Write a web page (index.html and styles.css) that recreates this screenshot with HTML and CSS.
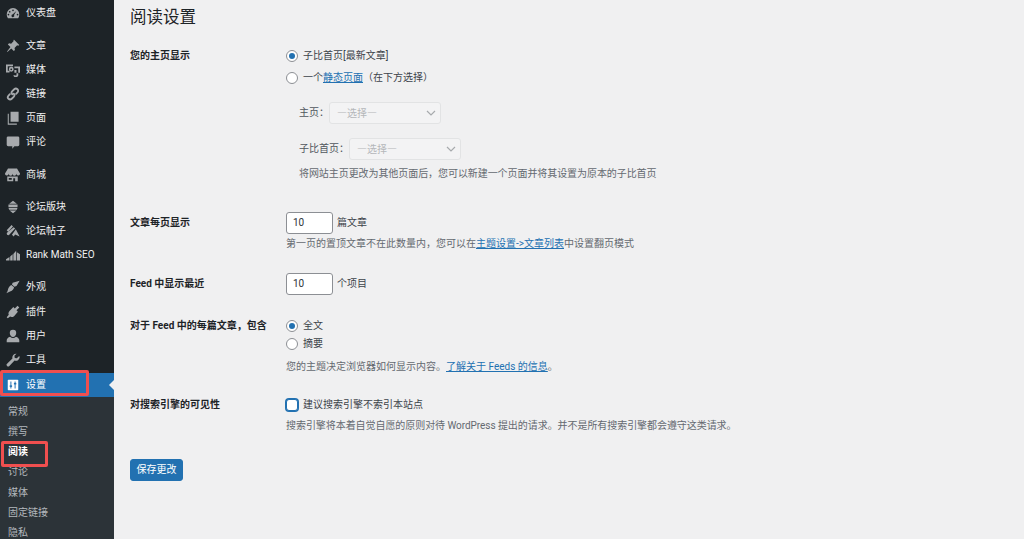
FILE: index.html
```html
<!DOCTYPE html>
<html lang="zh-CN">
<head>
<meta charset="utf-8">
<title>阅读设置</title>
<link rel="stylesheet" href="styles.css">
</head>
<body>
<aside class="sidebar">
  <nav class="menu">
    <a class="item"><svg class="ic" viewBox="0 0 20 20"><path d="M10 3a9 9 0 0 0-9 9c0 2 .7 3.900 1.800 5.500h14.400A9 9 0 0 0 19 12a9 9 0 0 0-9-9zM10 5a1.200 1.200 0 1 1 0 2.400A1.200 1.200 0 0 1 10 5zM5.300 7a1.200 1.200 0 1 1 0 2.400 1.200 1.200 0 0 1 0-2.400zM14.800 7l-3.300 5.800a2 2 0 1 1-1.700-.9zM3.500 11a1.200 1.200 0 1 1 0 2.400 1.200 1.200 0 0 1 0-2.400zM16.500 11a1.200 1.200 0 1 1 0 2.400 1.200 1.200 0 0 1 0-2.400z"/></svg><span>仪表盘</span></a>
    <div class="sep sep-first"></div>
    <a class="item"><svg class="ic" viewBox="0 0 20 20"><path d="M11.500 1l7.500 7.500-1.600 1-1.500-.5-3.700 3.700.6 3-1.600 1.600-3.700-3.700L2 18.500l-.5-.5 4.900-6.600L2.700 7.700l1.600-1.600 3 .6L11 3 10.500 1.500z"/></svg><span>文章</span></a>
    <a class="item"><svg class="ic" viewBox="0 0 20 20"><path d="M0 2h10v2.500H2.500V11H5v2.500H0zM7.500 5.500a3.500 3.500 0 1 1 0 7 3.500 3.500 0 0 1 0-7zM7.500 7.700a1.300 1.300 0 1 0 0 2.600 1.300 1.300 0 0 0 0-2.600zM12 5h8v9h-2.500V7.500H12zM17.500 14.500V16a3.500 3.500 0 0 1-7 1.500H13a1.200 1.200 0 0 0 2-1v-2zM12 10h3v4h-3z"/></svg><span>媒体</span></a>
    <a class="item"><svg class="ic line" viewBox="0 0 20 20"><path d="M9 10.500a3.200 3.200 0 0 1 0-4.500l2.800-2.800a3.200 3.200 0 0 1 4.600 4.600L14.500 9.700M11 9.500a3.200 3.200 0 0 1 0 4.500l-2.800 2.800a3.200 3.200 0 0 1-4.600-4.600l1.900-1.900"/></svg><span>链接</span></a>
    <a class="item"><svg class="ic" viewBox="0 0 20 20"><path d="M6.500 1H18v14.500H6.500zM4 4v14h11.500v1.500H2.500V4z"/></svg><span>页面</span></a>
    <a class="item"><svg class="ic" viewBox="0 0 20 20"><path d="M3 2h14a2 2 0 0 1 2 2v10a2 2 0 0 1-2 2h-5l-3 3.500V16H3a2 2 0 0 1-2-2V4a2 2 0 0 1 2-2z"/></svg><span>评论</span></a>
    <div class="sep"></div>
    <a class="item"><svg class="ic wide" viewBox="0 0 20 20"><path d="M4 2h12l4 6.500a2.500 2.500 0 0 1-5 .5 2.500 2.500 0 0 1-5 0 2.500 2.500 0 0 1-5 0 2.500 2.500 0 0 1-5-.5zM3 12.500h14V19h-3.500v-4h-2.500v4H3zM5 14.500v2.500h4v-2.500z"/></svg><span>商城</span></a>
    <div class="sep"></div>
    <a class="item"><svg class="ic" viewBox="0 0 20 20"><path d="M10 1l5.500 4.500h-11zM3.500 6.500h13v3.500h-13zM3.500 11h13l-1 3h-11zM5 15h10l-5 4z"/></svg><span>论坛版块</span></a>
    <a class="item"><svg class="ic" viewBox="0 0 20 20"><path d="M8 1.500l2 2-7 7.500-2-2zM11 4.500l2 2-9 9.500-2.500-.5-.5-2.500zM14 7.500l5.500 10.500-6.500-3-2 3-2.500-2.500z"/></svg><span>论坛帖子</span></a>
    <a class="item"><svg class="ic" viewBox="0 0 20 20"><path d="M0 16l5-3v5H0zM6 12l3.500-3v9H6zM10.500 8.500l4-4.500v14h-4zM15.500 6l4.500 3v9h-4.500z"/></svg><span>Rank Math SEO</span></a>
    <div class="sep"></div>
    <a class="item"><svg class="ic" viewBox="0 0 20 20"><path d="M19.500 1l-4.500 7.500-3 1-3.500-3 1-2.500zM7.500 7l4 3.500c-.5 3-2.500 5-5 5.500L.5 19c1.500-2 2-3.500 2.500-6 .5-2.500 2.500-4.500 4.500-6z"/></svg><span>外观</span></a>
    <a class="item"><svg class="ic" viewBox="0 0 20 20"><path d="M16.500 1L19 3.500l-4 4 2 2-5.500 6.500c-2 1.500-4.500 1.500-5.500.5L2.500 19 1 17.500 4 14c-1-1.500-.5-4 1-5.500L10.500 3l2 2z"/></svg><span>插件</span></a>
    <a class="item"><svg class="ic" viewBox="0 0 20 20"><path d="M10 1a4.600 4.600 0 0 1 4.600 4.800c0 2.700-2.100 5.700-4.600 5.700S5.400 8.500 5.400 5.800A4.600 4.600 0 0 1 10 1zM5.800 11c2.700 2.700 5.700 2.700 8.400 0 2.800.8 4.800 2.800 4.800 5v3H1v-3c0-2.200 2-4.200 4.800-5z"/></svg><span>用户</span></a>
    <a class="item"><svg class="ic" viewBox="0 0 20 20"><path d="M19.500 5a5.500 5.500 0 0 1-7.300 5.800L4.800 18.500a2.300 2.300 0 0 1-3.300-3.300l7.700-7.400A5.500 5.500 0 0 1 15 1l-3 3 .5 3 3 .5 3-3z"/></svg><span>工具</span></a>
    <a class="item current"><svg class="ic settings" viewBox="0 0 20 20"><rect x="2.500" y="2.500" width="15" height="15" rx="1"/><path class="sl" d="M7 5v10M13 5v10"/><rect class="kb" x="5.300" y="10.500" width="3.400" height="2.200"/><rect class="kb" x="11.300" y="7" width="3.400" height="2.200"/></svg><span>设置</span></a>
    <div class="submenu">
      <a class="subitem">常规</a>
      <a class="subitem">撰写</a>
      <a class="subitem active">阅读</a>
      <a class="subitem">讨论</a>
      <a class="subitem">媒体</a>
      <a class="subitem">固定链接</a>
      <a class="subitem">隐私</a>
    </div>
  </nav>
</aside>
<div class="mark mark-settings"></div>
<div class="mark mark-reading"></div>
<main class="main">
  <h1 class="title">阅读设置</h1>

  <section class="row row-front">
    <div class="label">您的主页显示</div>
    <div class="field">
      <div class="choice"><span class="radio on"></span>子比首页[最新文章]</div>
      <div class="choice gap-choice"><span class="radio"></span>一个<a class="link">静态页面</a>（在下方选择）</div>
      <div class="pick pick-first"><span>主页：</span><div class="select">—选择—<svg viewBox="0 0 12 12"><path d="M2 4l4 4 4-4"/></svg></div></div>
      <div class="pick pick-second"><span>子比首页：</span><div class="select">—选择—<svg viewBox="0 0 12 12"><path d="M2 4l4 4 4-4"/></svg></div></div>
      <p class="desc desc-front">将网站主页更改为其他页面后，您可以新建一个页面并将其设置为原本的子比首页</p>
    </div>
  </section>

  <section class="row row-posts">
    <div class="label label-input">文章每页显示</div>
    <div class="field">
      <div class="numline"><div class="num">10</div><span>篇文章</span></div>
      <p class="desc desc-posts">第一页的置顶文章不在此数量内，您可以在<a class="link">主题设置-&gt;文章列表</a>中设置翻页模式</p>
    </div>
  </section>

  <section class="row row-feed">
    <div class="label label-input">Feed 中显示最近</div>
    <div class="field">
      <div class="numline"><div class="num">10</div><span>个项目</span></div>
    </div>
  </section>

  <section class="row row-each">
    <div class="label">对于 Feed 中的每篇文章，包含</div>
    <div class="field">
      <div class="choice"><span class="radio on"></span>全文</div>
      <div class="choice gap-small"><span class="radio"></span>摘要</div>
      <p class="desc desc-each">您的主题决定浏览器如何显示内容。<a class="link">了解关于 Feeds 的信息</a>。</p>
    </div>
  </section>

  <section class="row row-search">
    <div class="label">对搜索引擎的可见性</div>
    <div class="field">
      <div class="choice"><span class="check"></span>建议搜索引擎不索引本站点</div>
      <p class="desc desc-search">搜索引擎将本着自觉自愿的原则对待 WordPress 提出的请求。并不是所有搜索引擎都会遵守这类请求。</p>
    </div>
  </section>

  <button class="save" type="button">保存更改</button>
</main>
</body>
</html>
```
FILE: styles.css
```css
* { box-sizing: border-box; }
html, body { margin: 0; height: 539px; overflow: hidden; }
body {
  position: relative;
  display: flex;
  background: #f0f0f1;
  color: #3c434a;
  font-family: Roboto, "Noto Sans CJK SC", sans-serif;
  font-size: 10px;
  line-height: 14px;
}
.sidebar { width: 114px; flex: none; height: 539px; background: #1d2327; overflow: hidden; }
.menu { padding-top: 1px; display: flex; flex-direction: column; }
.item {
  display: flex;
  align-items: center;
  height: 24.2px;
  color: #f0f0f1;
  font-size: 10px;
  gap: 6px;
  padding-left: 6px;
  flex: none;
}
.item .ic { width: 14px; height: 14px; fill: #a7aaad; fill-rule: evenodd; flex: none; }
.item .ic.line { fill: none; stroke: #a7aaad; stroke-width: 2.6; stroke-linecap: round; }
.item .ic.wide { width: 15px; height: 15px; margin: 0 0 0 -1px; }
.sep { height: 8px; flex: none; }
.sep-first { height: 8.4px; }
.item.current { position: relative; background: #2271b1; color: #fff; margin-top: .6px; }
.item.current .settings { fill: #fff; }
.item.current .sl { fill: none; stroke: #2271b1; stroke-width: 1.4; }
.item.current .kb { fill: #2271b1; }
.item.current::after {
  content: "";
  position: absolute;
  right: 0;
  top: 7px;
  border: 5px solid transparent;
  border-right-color: #f0f0f1;
  border-left-width: 0;
}
.submenu { background: #2c3338; padding-top: 5px; flex: none; height: 170px; display: flex; flex-direction: column; }
.subitem { height: 20.2px; line-height: 20px; padding-left: 8px; color: #b4b9be; font-size: 10px; flex: none; }
.subitem.active { color: #fff; font-weight: 700; }
.mark { position: absolute; border: 3px solid #f04f4f; border-radius: 2px; }
.mark-settings { left: 0; top: 370px; width: 89px; height: 26px; }
.mark-reading { left: 1px; top: 441px; width: 47px; height: 26px; }
.main { flex: 1; padding-left: 16px; min-width: 0; }
.title { margin: 7px 0 0; font-size: 16.5px; line-height: 22px; font-weight: 400; color: #1d2327; height: 22px; }
.row { display: flex; }
.label { width: 156px; flex: none; font-weight: 700; color: #1d2327; }
.label-input { padding-top: 4px; }
.field { flex: 1; min-width: 0; }
.choice { display: flex; align-items: center; height: 14px; color: #3c434a; }
.gap-choice { margin-top: 8px; }
.gap-small { margin-top: 4px; }
.radio {
  width: 12px;
  height: 12px;
  flex: none;
  margin-right: 5px;
  border: 1px solid #8c8f94;
  border-radius: 50%;
  background: #fff;
  position: relative;
}
.radio.on::after {
  content: "";
  position: absolute;
  left: 2px;
  top: 2px;
  width: 6px;
  height: 6px;
  border-radius: 50%;
  background: #2271b1;
}
.check {
  width: 12px;
  height: 12px;
  margin-right: 5px;
  flex: none;
  background: #fff;
  border: 1px solid #2271b1;
  border-radius: 3px;
  box-shadow: 0 0 0 1px #2271b1;
}
.link { color: #2271b1; text-decoration: underline; }
.pick { display: flex; align-items: center; padding-left: 13px; color: #50575e; }
.pick-first { margin-top: 17px; }
.pick-second { margin-top: 14px; }
.select {
  width: 112px;
  height: 22px;
  display: flex;
  align-items: center;
  justify-content: space-between;
  padding: 0 2px 0 7px;
  font-family: "Noto Sans CJK SC", sans-serif;
  color: #b5b7ba;
  background: #f3f3f4;
  border: 1px solid #e2e3e4;
  border-radius: 3px;
}
.select svg { width: 12px; height: 12px; fill: none; stroke: #a7aaad; stroke-width: 1.2; margin-right: 1px; }
.desc { margin: 0; color: #646970; }
.desc-front { margin-top: 7px; padding-left: 13px; letter-spacing: -.07px; }
.numline { display: flex; align-items: center; gap: 4px; }
.num {
  width: 47px;
  height: 22px;
  padding-left: 6px;
  line-height: 20px;
  background: #fff;
  border: 1px solid #8c8f94;
  border-radius: 3px;
  color: #2c3338;
}
.desc-posts { margin-top: 3px; }
.desc-each { margin-top: 9px; }
.desc-search { margin-top: 7px; letter-spacing: -.06px; }
.row-front { margin-top: 20px; }
.row-posts { margin-top: 31px; }
.row-feed { margin-top: 22px; }
.row-each { margin-top: 24px; }
.row-search { margin-top: 24px; }
.save {
  display: block;
  margin-top: 26px;
  width: 53px;
  height: 22px;
  padding: 0;
  border: 1px solid #2271b1;
  border-radius: 3px;
  background: #2271b1;
  color: #fff;
  font: inherit;
}
```
